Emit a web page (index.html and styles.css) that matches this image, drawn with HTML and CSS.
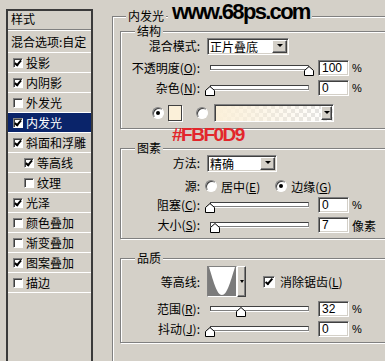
FILE: index.html
```html
<!DOCTYPE html>
<html lang="zh">
  <head>
    <meta charset="UTF-8" />
    <title>图层样式 - 内发光</title>
    <link rel="stylesheet" href="styles.css">
  </head>
  <body>
    <div class="dialog">
      <div class="styles">
        <div class="styles-head">样式</div>
        <div class="styles-blend">混合选项:自定</div>
        <div class="styles-item"><span class="check on"></span>投影</div>
        <div class="styles-item"><span class="check on"></span>内阴影</div>
        <div class="styles-item"><span class="check"></span>外发光</div>
        <div class="styles-item active"><span class="check on"></span>内发光</div>
        <div class="styles-item"><span class="check on"></span>斜面和浮雕</div>
        <div class="styles-item sub"><span class="check on"></span>等高线</div>
        <div class="styles-item sub"><span class="check"></span>纹理</div>
        <div class="styles-item"><span class="check on"></span>光泽</div>
        <div class="styles-item"><span class="check"></span>颜色叠加</div>
        <div class="styles-item"><span class="check"></span>渐变叠加</div>
        <div class="styles-item"><span class="check on"></span>图案叠加</div>
        <div class="styles-item"><span class="check"></span>描边</div>
      </div>

      <div class="effect">
        <div class="watermark">www.68ps.com</div>
        <div class="note">#FBF0D9</div>

        <fieldset class="group group-outer">
          <legend>内发光</legend>

          <fieldset class="group group-struct">
            <legend>结构</legend>
            <div class="row">
              <span class="row-label">混合模式:</span>
              <span class="select select-mode">正片叠底<span class="drop-btn"></span></span>
            </div>
            <div class="row row-opacity">
              <span class="row-label">不透明度(<u>O</u>):</span>
              <span class="slider">
                <span class="slider-track"></span>
                <svg class="slider-thumb" style="left:99px" width="10" height="10" viewBox="0 0 10 10"><path d="M0.5 9.5V4.5L5 0.5L9.5 4.5V9.5Z" fill="#fff" stroke="#000"/></svg>
              </span>
              <span class="field">100</span>
              <span class="unit">%</span>
            </div>
            <div class="row row-noise">
              <span class="row-label">杂色(<u>N</u>):</span>
              <span class="slider">
                <span class="slider-track"></span>
                <svg class="slider-thumb" style="left:0px" width="10" height="10" viewBox="0 0 10 10"><path d="M0.5 9.5V4.5L5 0.5L9.5 4.5V9.5Z" fill="#fff" stroke="#000"/></svg>
              </span>
              <span class="field">0</span>
              <span class="unit">%</span>
            </div>
            <div class="row row-color">
              <span class="radio on"></span>
              <span class="swatch"></span>
              <span class="radio radio-grad"></span>
              <span class="gradient"><span class="drop-btn"></span></span>
            </div>
          </fieldset>

          <fieldset class="group group-elements">
            <legend>图素</legend>
            <div class="row">
              <span class="row-label">方法:</span>
              <span class="select select-method">精确<span class="drop-btn"></span></span>
            </div>
            <div class="row row-source">
              <span class="row-label">源:</span>
              <span class="radio radio-center"></span>
              <span class="radio-text">居中(<u>E</u>)</span>
              <span class="radio radio-edge on"></span>
              <span class="radio-text">边缘(<u>G</u>)</span>
            </div>
            <div class="row row-choke">
              <span class="row-label">阻塞(<u>C</u>):</span>
              <span class="slider">
                <span class="slider-track"></span>
                <svg class="slider-thumb" style="left:0px" width="10" height="10" viewBox="0 0 10 10"><path d="M0.5 9.5V4.5L5 0.5L9.5 4.5V9.5Z" fill="#fff" stroke="#000"/></svg>
              </span>
              <span class="field">0</span>
              <span class="unit">%</span>
            </div>
            <div class="row row-size">
              <span class="row-label">大小(<u>S</u>):</span>
              <span class="slider">
                <span class="slider-track"></span>
                <svg class="slider-thumb" style="left:5px" width="10" height="10" viewBox="0 0 10 10"><path d="M0.5 9.5V4.5L5 0.5L9.5 4.5V9.5Z" fill="#fff" stroke="#000"/></svg>
              </span>
              <span class="field">7</span>
              <span class="unit unit-cn">像素</span>
            </div>
          </fieldset>

          <fieldset class="group group-quality">
            <legend>品质</legend>
            <div class="row row-contour">
              <span class="row-label">等高线:</span>
              <span class="contour">
                <span class="contour-preview">
                  <svg width="28" height="29" viewBox="0 0 28 29">
                    <rect width="28" height="29" fill="#7b7b7b"/>
                    <path d="M1 0C6 16 9 28 14 28C19 28 22 16 27 0Z" fill="#fff"/>
                  </svg>
                </span>
                <span class="drop-btn contour-btn"></span>
              </span>
              <span class="check large on"></span>
              <span class="check-text">消除锯齿(<u>L</u>)</span>
            </div>
            <div class="row row-range">
              <span class="row-label">范围(<u>R</u>):</span>
              <span class="slider">
                <span class="slider-track"></span>
                <svg class="slider-thumb" style="left:31px" width="10" height="10" viewBox="0 0 10 10"><path d="M0.5 9.5V4.5L5 0.5L9.5 4.5V9.5Z" fill="#fff" stroke="#000"/></svg>
              </span>
              <span class="field">32</span>
              <span class="unit">%</span>
            </div>
            <div class="row row-jitter">
              <span class="row-label">抖动(<u>J</u>):</span>
              <span class="slider">
                <span class="slider-track"></span>
                <svg class="slider-thumb" style="left:0px" width="10" height="10" viewBox="0 0 10 10"><path d="M0.5 9.5V4.5L5 0.5L9.5 4.5V9.5Z" fill="#fff" stroke="#000"/></svg>
              </span>
              <span class="field">0</span>
              <span class="unit">%</span>
            </div>
          </fieldset>
        </fieldset>
      </div>
    </div>
  </body>
</html>
```

FILE: styles.css
```css
body {
  margin: 0;
  background: #d4d0c8;
  font-family: "Noto Sans CJK SC", sans-serif;
  font-size: 12px;
  color: #000;
  overflow: hidden;
}
u {
  text-decoration: underline;
}
.dialog {
  display: flex;
  align-items: flex-start;
  padding-left: 6px;
  height: 361px;
}

/* left list of styles */
.styles {
  flex-shrink: 0;
  width: 87px;
  height: 370px;
  margin-top: 9px;
  box-sizing: border-box;
  border: 2px solid #3a3a3a;
}
.styles-head {
  height: 16px;
  line-height: 16px;
  padding: 0 0 2px 3px;
  border-bottom: 1px solid #808080;
}
.styles-blend {
  height: 21px;
  line-height: 21px;
  padding-left: 3px;
  border-top: 1px solid #fff;
  border-bottom: 1px solid #fff;
}
.styles-item {
  display: flex;
  align-items: center;
  height: 19px;
  padding-left: 5px;
  border-bottom: 1px solid #fff;
}
.styles-item.sub {
  padding-left: 16px;
}
.styles-item.active {
  background: #0a246a;
  color: #fff;
}
.check {
  position: relative;
  flex-shrink: 0;
  width: 10px;
  height: 10px;
  margin-right: 3px;
  box-sizing: border-box;
  background: #fff;
  border: 1px solid;
  border-color: #808080 #fff #fff #808080;
  box-shadow: inset 1px 1px #404040;
}
.check.on::after {
  content: "";
  position: absolute;
  left: 2px;
  top: 0;
  width: 2px;
  height: 5px;
  border: solid #000;
  border-width: 0 2px 2px 0;
  transform: rotate(40deg);
}
.check.large {
  width: 12px;
  height: 12px;
  margin: 0 0 0 17px;
}
.check.large.on::after {
  left: 3px;
  top: 0;
  height: 6px;
}
.check-text {
  margin-left: 5px;
  white-space: nowrap;
}

/* right panel */
.effect {
  position: relative;
  flex-shrink: 0;
  margin-left: 19px;
}
.watermark {
  position: absolute;
  left: 56px;
  top: 0;
  padding: 0 2px 0 4px;
  background: #d4d0c8;
  font: bold 22px/24px "Liberation Sans", Arial, sans-serif;
  letter-spacing: -1.7px;
  white-space: nowrap;
}
.note {
  position: absolute;
  left: 60px;
  top: 125px;
  color: #e3262b;
  font: bold 19px/19px "Liberation Sans", Arial, sans-serif;
  letter-spacing: -1.5px;
}
.group {
  margin: 0;
  padding: 0;
  min-width: 0;
  border: 1px solid #808080;
  box-shadow: inset 1px 1px #fff, 1px 1px #fff;
}
.group legend {
  margin-left: 14px;
  padding: 0 2px;
  line-height: 14px;
  background: #d4d0c8;
}
.group-outer {
  width: 330px;
  height: 400px;
  margin-top: 9px;
  padding: 0 7px;
  box-sizing: border-box;
}
.group-outer > legend {
  margin-left: 6px;
}
.group-struct {
  margin-top: 1px;
  padding-bottom: 6px;
}
.group-elements {
  margin-top: 12px;
  padding-bottom: 5px;
}
.group-quality {
  margin-top: 12px;
  padding-bottom: 5px;
}

.row {
  display: flex;
  align-items: center;
  height: 16px;
}
.row-label {
  flex-shrink: 0;
  width: 79px;
  line-height: 16px;
  text-align: right;
  white-space: nowrap;
}
.row-opacity {
  margin-top: 6px;
}
.row-noise {
  margin-top: 4px;
}
.row-color {
  height: 18px;
  margin-top: 8px;
  padding-left: 31px;
}
.row-source {
  margin-top: 7px;
}
.row-choke {
  margin-top: 3px;
}
.row-size {
  margin-top: 4px;
}
.row-contour {
  height: 31px;
  margin-top: 1px;
}
.row-range,
.row-jitter {
  margin-top: 4px;
}

/* controls */
.select {
  display: flex;
  align-items: center;
  justify-content: space-between;
  height: 17px;
  margin-left: 7px;
  padding: 0 1px 0 2px;
  box-sizing: border-box;
  background: #fff;
  border: 1px solid;
  border-color: #808080 #fff #fff #808080;
  box-shadow: inset 1px 1px #404040, inset -1px -1px #d4d0c8;
  line-height: 13px;
  white-space: nowrap;
}
.select-mode {
  width: 82px;
}
.select-method {
  width: 70px;
}
.drop-btn {
  position: relative;
  flex-shrink: 0;
  width: 15px;
  height: 13px;
  box-sizing: border-box;
  background: #d4d0c8;
  border: 1px solid;
  border-color: #fff #404040 #404040 #fff;
  box-shadow: inset -1px -1px #808080;
}
.drop-btn::after {
  content: "";
  position: absolute;
  left: 50%;
  top: 50%;
  margin: -2px 0 0 -3px;
  border: 3px solid transparent;
  border-top-color: #000;
  border-bottom: 0;
}
.field {
  flex-shrink: 0;
  width: 31px;
  height: 16px;
  margin-left: 4px;
  padding: 1px 0 0 3px;
  box-sizing: border-box;
  background: #fff;
  border: 1px solid;
  border-color: #808080 #fff #fff #808080;
  box-shadow: inset 1px 1px #404040, inset -1px -1px #d4d0c8;
  font: 12px/13px "Liberation Sans", Arial, sans-serif;
}
.unit {
  margin-left: 3px;
  font: 11px "Liberation Sans", Arial, sans-serif;
}
.unit-cn {
  font: 12px "Noto Sans CJK SC", sans-serif;
}
.slider {
  position: relative;
  flex-shrink: 0;
  width: 109px;
  height: 16px;
  margin-left: 5px;
}
.slider-track {
  display: block;
  height: 5px;
  margin: 5px 5px 0;
  box-sizing: border-box;
  background: #fff;
  border: 1px solid;
  border-color: #404040 #808080 #808080 #404040;
  box-shadow: 0 1px #fff;
}
.slider-thumb {
  position: absolute;
  top: 6px;
}
.radio {
  position: relative;
  flex-shrink: 0;
  width: 12px;
  height: 12px;
  box-sizing: border-box;
  border-radius: 50%;
  background: #fff;
  border: 1px solid;
  border-color: #808080 #fff #fff #808080;
  box-shadow: inset 1px 1px #404040;
}
.radio.on::after {
  content: "";
  position: absolute;
  left: 3px;
  top: 3px;
  width: 4px;
  height: 4px;
  border-radius: 50%;
  background: #000;
}
.radio-center {
  margin-left: 5px;
}
.radio-edge {
  margin-left: 15px;
}
.radio-text {
  margin-left: 4px;
  white-space: nowrap;
}
.swatch {
  flex-shrink: 0;
  width: 14px;
  height: 16px;
  margin-left: 4px;
  box-sizing: border-box;
  background: #fbf0d9;
  border: 1px solid #404040;
  box-shadow: 1px 1px #fff;
}
.radio-grad {
  margin-left: 14px;
}
.gradient {
  display: flex;
  align-items: center;
  justify-content: flex-end;
  flex-shrink: 0;
  width: 120px;
  height: 18px;
  margin-left: 6px;
  padding-right: 1px;
  box-sizing: border-box;
  border: 1px solid;
  border-color: #808080 #fff #fff #808080;
  box-shadow: inset 1px 1px #404040;
  background:
    linear-gradient(to right, #fbf0d9, rgba(251, 240, 217, 0)),
    repeating-conic-gradient(#fff 0 25%, #e2e2e2 0 50%) 0 0 / 8px 8px;
}
.gradient .drop-btn {
  width: 11px;
  height: 14px;
}
.contour {
  display: flex;
  flex-shrink: 0;
  height: 31px;
  margin-left: 7px;
}
.contour-preview {
  width: 30px;
  height: 31px;
  box-sizing: border-box;
  border: 1px solid;
  border-color: #808080 #fff #fff #808080;
}
.contour-preview svg {
  display: block;
}
.contour-btn {
  width: 9px;
  height: 31px;
}
.contour-btn::after {
  margin-left: -2px;
  border-width: 3px 2px 0;
}
```
